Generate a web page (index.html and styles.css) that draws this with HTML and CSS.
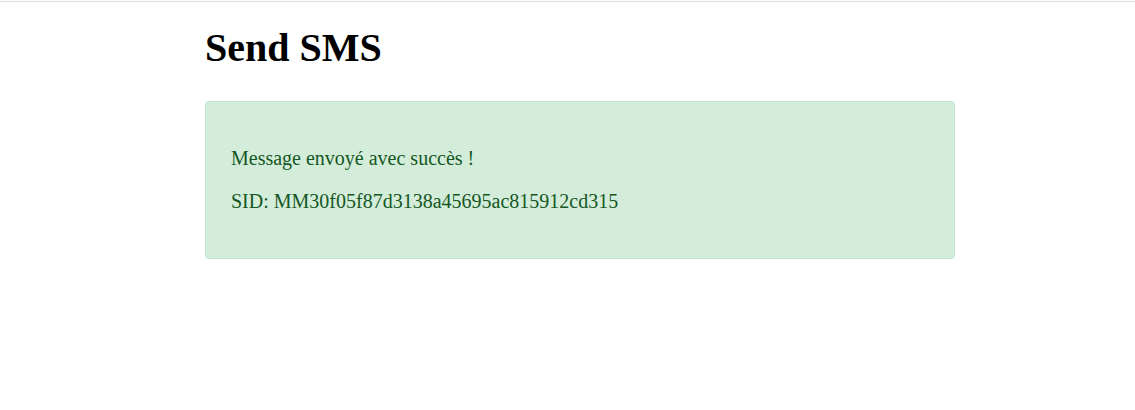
FILE: index.html
```html
<!DOCTYPE html>
<html lang="fr">
<head>
<meta charset="utf-8">
<title>Send SMS</title>
<link rel="stylesheet" href="styles.css">
</head>
<body>
<div class="topline"></div>
<div class="page">
  <div class="container">
    <h1 class="title">Send SMS</h1>
    <div class="alert">
      <p class="alert-line">Message envoyé avec succès !</p>
      <p class="alert-line">SID: MM30f05f87d3138a45695ac815912cd315</p>
    </div>
  </div>
</div>
</body>
</html>
```
FILE: styles.css
```css
html, body {
  margin: 0;
  padding: 0;
  background: #ffffff;
}
body {
  font-family: "Liberation Serif", "Times New Roman", serif;
  color: #000;
}
.topline {
  margin-top: 1px;
  border-top: 1px solid #dcdcdc;
}
.page {
  padding-left: 25px;
  padding-top: 23px;
}
.container {
  width: 750px;
  margin: 0 auto;
}
.title {
  font-size: 40px;
  font-weight: bold;
  line-height: 46px;
  margin: 0 0 30px 0;
}
.alert {
  background: #d4edda;
  border: 1px solid #c3e6cb;
  border-radius: 4px;
  padding: 25px;
  color: #155724;
}
.alert-line {
  font-size: 20px;
  line-height: 23px;
  margin: 20px 0;
}
```
